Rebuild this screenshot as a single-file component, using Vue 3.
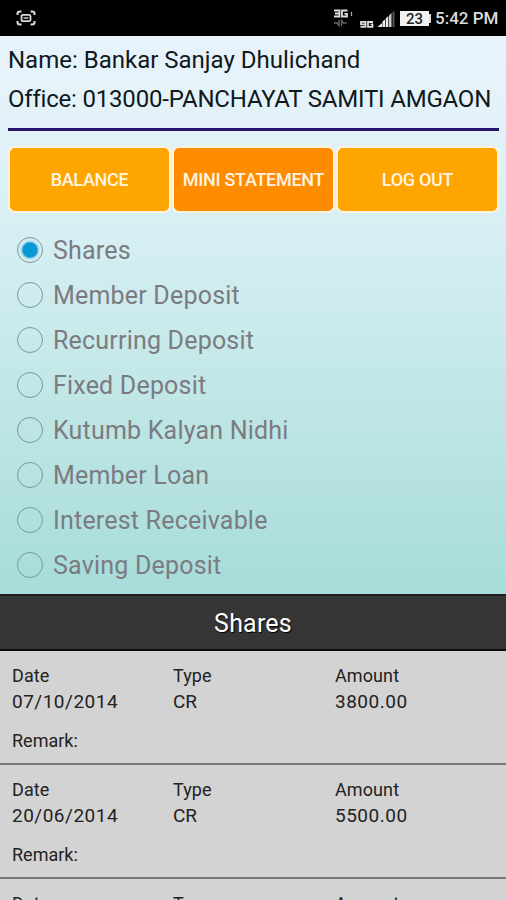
<script setup>
import { ref } from 'vue'

const buttons = ['BALANCE', 'MINI STATEMENT', 'LOG OUT']
const active = ref('MINI STATEMENT')
const accounts = [
  'Shares',
  'Member Deposit',
  'Recurring Deposit',
  'Fixed Deposit',
  'Kutumb Kalyan Nidhi',
  'Member Loan',
  'Interest Receivable',
  'Saving Deposit',
]
const selected = ref('Shares')
const entries = [
  { date: '07/10/2014', type: 'CR', amount: '3800.00' },
  { date: '20/06/2014', type: 'CR', amount: '5500.00' },
  { date: '', type: '', amount: '' },
]
</script>

<template>
  <div class="screen">
    <header class="status">
      <svg class="capture" width="20" height="16" viewBox="0 0 20 16" fill="none" stroke="#ddd">
        <path d="M1.500 5V3.500Q1.500 1.500 4 1.500H5.500M14.500 1.500H16Q18.500 1.500 18.500 3.500V5M18.500 11V12.500Q18.500 14.500 16 14.500H14.500M5.500 14.500H4Q1.500 14.500 1.500 12.500V11" stroke-width="2" />
        <rect x="5.500" y="4.800" width="9" height="6.400" rx="1.500" stroke-width="1.800" />
        <path d="M7.500 8H12.500" stroke="#999" stroke-width="2" />
      </svg>
      <div class="tray">
        <svg width="64" height="22" viewBox="0 0 64 22" fill="none">
          <g stroke="#ddd" stroke-width="1.800">
            <path d="M1 2.500H6.500V8.500H1M2 5.500H6.500M14.500 2.500H9V8.500H14V5.800H11.500" />
            <path d="M18.500 4V8" stroke="#aaa" stroke-width="1.300" />
            <path d="M27.500 17.500H32.500V12.500H28V15H32.500M40 12.700H35V17.500H39.500V15H37.500" transform="translate(0 1.300)" />
          </g>
          <path d="M1 15H4L6 17.500V12M8.500 18V12.500L10.500 15H13.500" stroke="#666" stroke-width="1.400" />
          <path d="M44.500 19L49 15V19ZM49.500 19V13.500L52 11.500V19ZM52.700 19V10.500L55.300 8V19Z" fill="#eee" />
          <path d="M56 19V7.500L58.500 5V19Z" fill="#ccc" />
          <path d="M59.500 19V4.500L61.500 2.500V19Z" fill="#555" />
        </svg>
        <span class="battery"><span class="level">23</span><i class="nub"></i></span>
        <span class="clock">5:42 PM</span>
      </div>
    </header>

    <main class="account">
      <div class="owner">
        <p class="name">Name: Bankar Sanjay Dhulichand</p>
        <p class="office">Office: 013000-PANCHAYAT SAMITI AMGAON</p>
      </div>
      <nav class="actions">
        <button
          v-for="b in buttons"
          :key="b"
          class="action"
          :class="{ active: b === active }"
          @click="active = b"
        >{{ b }}</button>
      </nav>
      <div class="choices">
        <label v-for="a in accounts" :key="a" class="choice">
          <input v-model="selected" class="radio" type="radio" name="account" :value="a" />
          <span>{{ a }}</span>
        </label>
      </div>
    </main>

    <h1 class="title">{{ selected }}</h1>

    <section class="entries">
      <article v-for="(e, i) in entries" :key="i" class="entry">
        <div class="cols">
          <div class="col"><span class="label">Date</span><span class="value">{{ e.date }}</span></div>
          <div class="col"><span class="label">Type</span><span class="value code">{{ e.type }}</span></div>
          <div class="col"><span class="label">Amount</span><span class="value">{{ e.amount }}</span></div>
        </div>
        <div class="remark">Remark:</div>
      </article>
    </section>
  </div>
</template>

<style>
body {
  margin: 0;
  overflow: hidden;
}
</style>

<style scoped>
.screen {
  width: 506px;
  height: 900px;
  overflow: hidden;
  display: flex;
  flex-direction: column;
  font-family: Roboto, "Liberation Sans", sans-serif;
  background: #d3d3d3;
}
.status {
  height: 36px;
  flex: none;
  box-sizing: border-box;
  background: #000;
  display: flex;
  justify-content: space-between;
  padding: 0 8px 0 16px;
}
.capture {
  margin-top: 10px;
}
.tray {
  display: flex;
  padding-top: 8px;
}
.battery {
  display: flex;
  align-items: center;
  height: 15px;
  margin: 3px 0 0 3px;
}
.level {
  width: 29px;
  height: 15px;
  background: #f2f2f2;
  color: #222;
  font: 500 15px/16px Roboto, sans-serif;
  text-align: center;
}
.nub {
  width: 2px;
  height: 9px;
  background: #ddd;
}
.clock {
  margin-left: 4px;
  width: 63px;
  color: #dcdcdc;
  font-size: 17px;
  font-weight: 500;
  line-height: 21px;
  white-space: nowrap;
}
.account {
  height: 558px;
  flex: none;
  background: linear-gradient(#e8f3fb 0%, #e0f2f7 22%, #cdebed 48%, #bae4e3 74%, #a6dcda 100%);
}
.owner {
  height: 92px;
  margin: 0 7px 0 8px;
  border-bottom: 3px solid #24146c;
  color: #101820;
  white-space: nowrap;
}
.owner p {
  margin: 0;
  font-size: 24px;
  line-height: 40px;
}
.owner .name {
  padding-top: 4px;
  letter-spacing: 0;
}
.owner .office {
  line-height: 39px;
  letter-spacing: -0.2px;
}
.actions {
  display: grid;
  grid-template-columns: repeat(3, 1fr);
  gap: 1px;
  padding: 15px 7px 0 8px;
}
.action {
  height: 67px;
  padding: 0;
  border: 2px solid #fff3dc;
  border-radius: 7px;
  background: #ffa500;
  color: #fff4e4;
  font: 500 18px/64px Roboto, sans-serif;
  letter-spacing: -0.3px;
  white-space: nowrap;
}
.action.active {
  background: #ff8c00;
}
.choices {
  padding: 14px 0 0 17px;
}
.choice {
  display: flex;
  height: 45px;
  align-items: center;
  gap: 10px;
  color: #7b7b80;
  font-size: 25px;
  letter-spacing: 0.2px;
  line-height: 45px;
}
.choice span {
  padding-top: 2px;
}
.radio {
  appearance: none;
  width: 26px;
  height: 26px;
  margin: 0;
  border: 1.5px solid #75999d;
  border-radius: 50%;
}
.radio:checked {
  background: radial-gradient(circle, #0999d2 7px, #a9d9ea 8.5px, #d3ecf2 10px);
  border-color: #7b999f;
}
.title {
  height: 57px;
  flex: none;
  box-sizing: border-box;
  margin: 0;
  border-top: 2px solid #201c1c;
  border-bottom: 2px solid #080808;
  background: #353535;
  color: #fff;
  font-size: 25px;
  font-weight: 400;
  letter-spacing: 0.2px;
  line-height: 55px;
  text-align: center;
  text-shadow: 1px 1px 1px #000;
}
.entry {
  height: 114px;
  box-sizing: border-box;
  padding: 12px 0 0 12px;
  border-bottom: 2px solid #777;
  color: #222;
  font-size: 18px;
}
.cols {
  display: grid;
  grid-template-columns: 161px 162px 1fr;
}
.col {
  display: flex;
  flex-direction: column;
}
.label,
.value {
  height: 26px;
  line-height: 26px;
}
.label {
  letter-spacing: 0.1px;
}
.value {
  font-size: 19px;
  letter-spacing: 0.5px;
}
.value.code {
  letter-spacing: 0;
}
.remark {
  padding-top: 13px;
  line-height: 26px;
}
</style>
